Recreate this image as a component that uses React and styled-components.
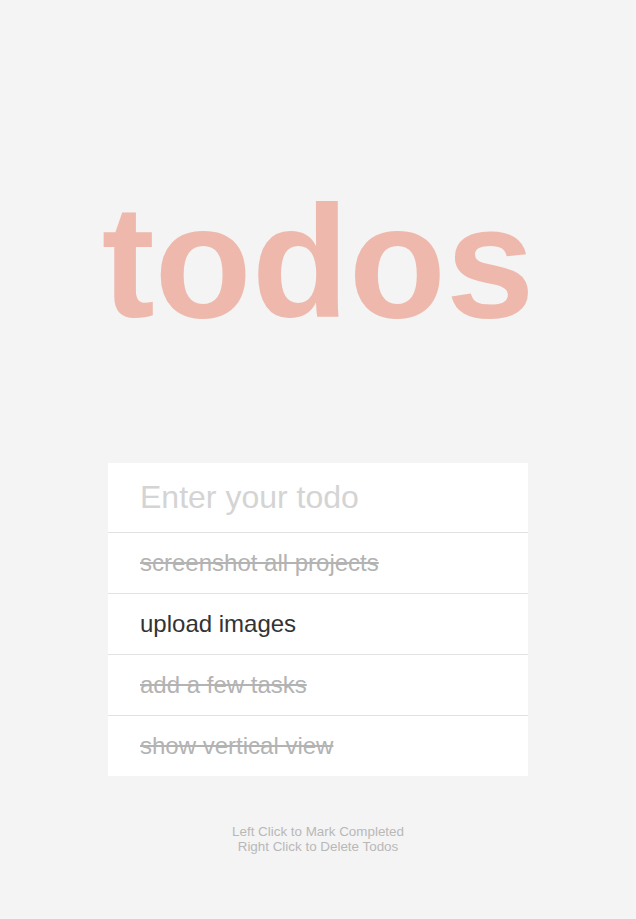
import React, { useState } from 'react';
import styled, { createGlobalStyle } from 'styled-components';

const GlobalStyle = createGlobalStyle`
  html, body {
    margin: 0;
    padding: 0;
    background: #f4f4f4;
    font-family: 'Liberation Sans', Arial, sans-serif;
  }
`;

const Page = styled.div`
  display: flex;
  flex-direction: column;
  align-items: center;
  padding-top: 171px;
  min-height: 100vh;
  box-sizing: border-box;
`;

const Title = styled.h1`
  margin: 0 0 109px;
  height: 183px;
  font-size: 159px;
  font-weight: bold;
  line-height: 183px;
  color: #eeb8ac;
  text-align: center;
`;

const Card = styled.div`
  width: 420px;
  background: #fff;
`;

const TodoInput = styled.input`
  display: block;
  width: 100%;
  box-sizing: border-box;
  border: none;
  outline: none;
  padding: 16px 32px;
  font-family: 'Liberation Sans', Arial, sans-serif;
  font-size: 32px;
  line-height: normal;
  color: #333;
  background: transparent;

  &::placeholder {
    color: #d4d4d4;
  }
`;

const List = styled.ul`
  list-style: none;
  margin: 0;
  padding: 0;
`;

const Item = styled.li`
  border-top: 1px solid #e2e2e2;
  padding: 16px 32px;
  font-size: 24px;
  line-height: normal;
  cursor: pointer;
  user-select: none;
  color: ${(p) => (p.$done ? '#b3b3b3' : '#333')};
  text-decoration: ${(p) => (p.$done ? 'line-through' : 'none')};
`;

const Hint = styled.p`
  margin: 48px 0 0;
  font-size: 13.4px;
  line-height: 15px;
  color: #b8b8b8;
  text-align: center;
`;

const initialTodos = [
  { text: 'screenshot all projects', done: true },
  { text: 'upload images', done: false },
  { text: 'add a few tasks', done: true },
  { text: 'show vertical view', done: true },
];

export default function App() {
  const [todos, setTodos] = useState(initialTodos);
  const [value, setValue] = useState('');

  const toggle = (i) =>
    setTodos((t) => t.map((todo, j) => (j === i ? { ...todo, done: !todo.done } : todo)));

  const remove = (e, i) => {
    e.preventDefault();
    setTodos((t) => t.filter((_, j) => j !== i));
  };

  const onKeyDown = (e) => {
    if (e.key === 'Enter' && value.trim()) {
      setTodos((t) => [...t, { text: value.trim(), done: false }]);
      setValue('');
    }
  };

  return (
    <Page>
      <GlobalStyle />
      <Title>todos</Title>
      <Card>
        <TodoInput
          placeholder="Enter your todo"
          value={value}
          onChange={(e) => setValue(e.target.value)}
          onKeyDown={onKeyDown}
        />
        <List>
          {todos.map((todo, i) => (
            <Item
              key={i}
              $done={todo.done}
              onClick={() => toggle(i)}
              onContextMenu={(e) => remove(e, i)}
            >
              {todo.text}
            </Item>
          ))}
        </List>
      </Card>
      <Hint>
        Left Click to Mark Completed
        <br />
        Right Click to Delete Todos
      </Hint>
    </Page>
  );
}
